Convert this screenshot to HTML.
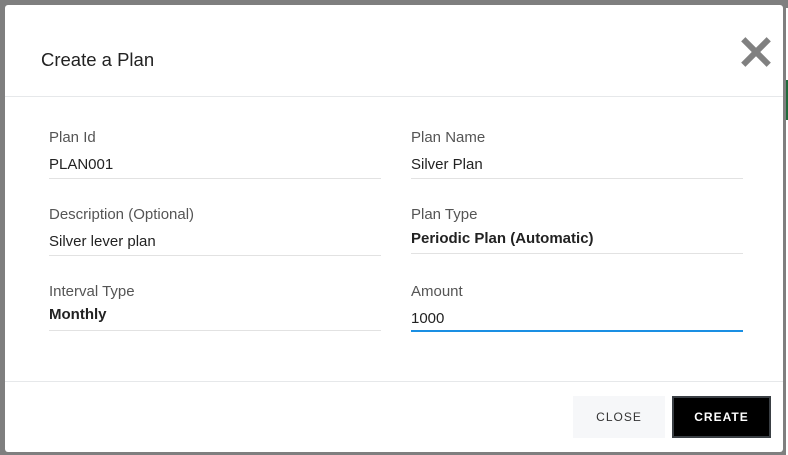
<!DOCTYPE html>
<html><head><meta charset="utf-8"><style>
html,body{margin:0;padding:0;}
body{width:788px;height:455px;background:#7f7f7f;position:relative;overflow:hidden;font-family:"Liberation Sans",sans-serif;}
.edge{position:absolute;left:786px;top:8px;width:2px;height:447px;background:#fff;}
.edge2{position:absolute;left:786px;top:80px;width:2px;height:40px;background:#1f6b3a;}
.modal{position:absolute;left:5px;top:5px;width:778px;height:447px;background:#fff;border-radius:3px;}
.title{position:absolute;left:36px;top:44px;font-size:18.5px;color:#222;}
.x{position:absolute;left:737px;top:33px;width:28px;height:28px;}
.x:before,.x:after{content:"";position:absolute;left:11px;top:-4px;width:6px;height:36px;background:#808080;transform:rotate(45deg);}
.x:after{transform:rotate(-45deg);}
.hr1{position:absolute;left:0;right:0;top:91px;height:1px;background:#e6e8ea;}
.hr2{position:absolute;left:0;right:0;top:376px;height:1px;background:#e6e8ea;}
.f{position:absolute;width:332px;}
.f .l{font-size:15px;color:#555;position:absolute;top:0;left:0;white-space:nowrap;}
.f .v{font-size:15px;color:#222;position:absolute;left:0;white-space:nowrap;}
.f .u{position:absolute;left:0;right:0;height:1px;background:#e2e2e2;}
.b{font-weight:bold;}
.btn{position:absolute;top:391px;height:42px;font-size:12px;letter-spacing:1px;display:flex;align-items:center;justify-content:center;box-sizing:border-box;}
</style></head><body>
<div class="edge"></div><div class="edge2"></div>
<div class="modal">
<div class="title">Create a Plan</div>
<div class="x"></div>
<div class="hr1"></div>

<div class="f" style="left:44px;top:124px"><div class="l">Plan Id</div><div class="v" style="top:27px">PLAN001</div><div class="u" style="top:49px"></div></div>
<div class="f" style="left:406px;top:124px"><div class="l">Plan Name</div><div class="v" style="top:27px">Silver Plan</div><div class="u" style="top:49px"></div></div>

<div class="f" style="left:44px;top:201px"><div class="l">Description (Optional)</div><div class="v" style="top:27px">Silver lever plan</div><div class="u" style="top:49px"></div></div>
<div class="f" style="left:406px;top:201px"><div class="l">Plan Type</div><div class="v b" style="top:24px">Periodic Plan (Automatic)</div><div class="u" style="top:47px"></div></div>

<div class="f" style="left:44px;top:278px"><div class="l">Interval Type</div><div class="v b" style="top:23px">Monthly</div><div class="u" style="top:47px"></div></div>
<div class="f" style="left:406px;top:278px"><div class="l">Amount</div><div class="v" style="top:27px">1000</div><div class="u" style="top:47px;height:2px;background:#1a8fe3"></div></div>

<div class="hr2"></div>
<div class="btn" style="left:568px;width:92px;background:#f6f7f9;color:#333;">CLOSE</div>
<div class="btn" style="left:667px;width:99px;background:#000;color:#fff;border:2px solid #3a3f44;font-weight:bold;">CREATE</div>
</div>
</body></html>
